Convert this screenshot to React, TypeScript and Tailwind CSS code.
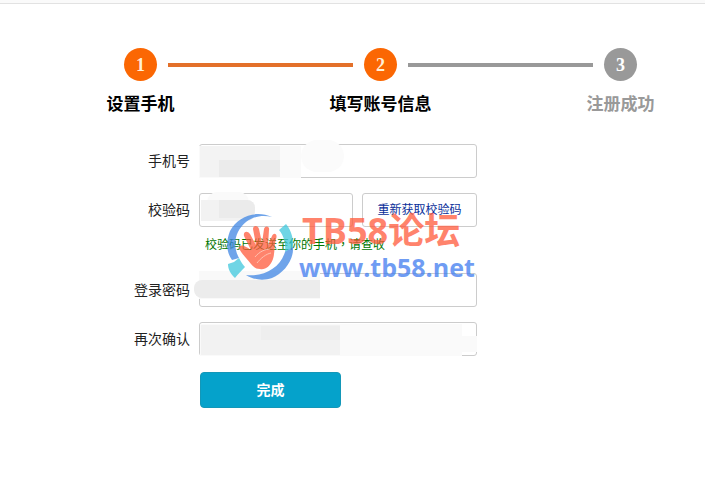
import { Fragment } from "react";
import type { ReactNode } from "react";

type Step = { id: number; title: string; done: boolean; lineDone: boolean };

const steps: Step[] = [
  { id: 1, title: "设置手机", done: true, lineDone: true },
  { id: 2, title: "填写账号信息", done: true, lineDone: false },
  { id: 3, title: "注册成功", done: false, lineDone: false },
];

const fieldClass =
  "block h-[34px] w-full rounded-[3px] border border-[#cccccc] bg-white px-2 text-sm outline-none";

function Stepper() {
  return (
    <ol className="flex items-start pr-[68px] pl-[124px]">
      {steps.map((step, i) => (
        <Fragment key={step.id}>
          <li className="flex w-[33px] shrink-0 flex-col items-center">
            <span
              className={`flex h-[33px] w-[33px] items-center justify-center rounded-full font-['Liberation_Serif',serif] text-lg leading-none font-bold ${
                step.done ? "bg-[#fb6703] text-[#fff0d8]" : "bg-[#999999] text-white"
              }`}
            >
              {step.id}
            </span>
            <span
              className={`mt-3 text-[17px] leading-6 font-bold whitespace-nowrap ${
                step.done ? "text-black" : "text-[#999999]"
              }`}
            >
              {step.title}
            </span>
          </li>
          {i < steps.length - 1 && (
            <li
              aria-hidden="true"
              className={`mx-[11px] mt-[15px] h-1 flex-1 ${step.lineDone ? "bg-[#e3702a]" : "bg-[#999999]"}`}
            />
          )}
        </Fragment>
      ))}
    </ol>
  );
}

function Row({ id, label, children }: { id: string; label: string; children: ReactNode }) {
  return (
    <div className="flex items-center gap-[9px]">
      <label htmlFor={id} className="w-[190px] shrink-0 text-right text-sm text-[#222222]">
        {label}
      </label>
      <div className="relative w-[278px]">{children}</div>
    </div>
  );
}

function Patch({ className }: { className: string }) {
  return <span aria-hidden="true" className={`pointer-events-none absolute ${className}`} />;
}

function Watermark() {
  return (
    <div className="pointer-events-none absolute top-[213px] left-[226px] flex items-start gap-1 opacity-75">
      <svg viewBox="0 0 68 68" className="h-[68px] w-[68px]" aria-hidden="true">
        <path d="M46 4C30-3 12 3 4 18C0 28 0 39 6 47L13 45C6 32 9 18 20 9C28 3 37 2 46 4Z" fill="#3f86e4" />
        <path d="M8 49L13 45C15 49 17 52 19 54C16 57 12 61 9 65C4 60 2 56 2 51Z" fill="#3fc8dd" />
        <path d="M53 17L60 11C66 18 68 28 67 36L59 40C60 31 58 23 53 17Z" fill="#3fc8dd" />
        <path d="M67 34C68 47 58 60 46 65C37 68 28 67 20 62C38 64 54 55 59 39Z" fill="#3f86e4" />
        <path
          d="M25 51C21 46 15 40 13 35C14 31 18 32 25 37L18 23C17 19 21 17 24 21L30 32L27 16C27 12 32 12 33 16L36 30L38 16C39 12 44 13 43 17L42 32L46 23C48 19 52 21 50 26C48 32 49 40 47 46C44 54 39 57 34 56C29 56 28 54 25 51Z"
          fill="#ff5a3c"
        />
        <path d="M31 50C35 45 40 41 45 40M29 44C33 39 39 36 44 36" fill="none" stroke="#ffad96" strokeWidth="1" />
      </svg>
      <div className="font-['Open_Sans','Noto_Sans_CJK_SC',sans-serif] font-bold whitespace-nowrap">
        <p className="pl-1 text-[36px] leading-9 text-[#ff5a3c]">TB58论坛</p>
        <p className="pt-1.5 pl-px text-[25px] leading-6 text-[#3f7bf0]">www.tb58.net</p>
      </div>
    </div>
  );
}

export default function App() {
  return (
    <main className="relative min-h-screen bg-white font-['Liberation_Sans','Noto_Sans_CJK_SC',sans-serif]">
      <div className="h-1 border-b border-[#e2e2e2] bg-[#fafafa]" />
      <div className="pt-11">
        <Stepper />
      </div>

      <form className="mt-[27px] flex flex-col gap-[15px]" onSubmit={(e) => e.preventDefault()}>
        <Row id="phone" label="手机号">
          <input id="phone" type="tel" className={fieldClass} />
          <Patch className="top-[2px] left-0 h-8 w-[102px] bg-[#fafafa]" />
          <Patch className="top-[2px] left-px h-[31px] w-20 bg-[#f3f3f3]" />
          <Patch className="top-[16px] left-5 h-[17px] w-[61px] bg-[#ebebeb]" />
          <Patch className="-top-1 left-[102px] h-8 w-[43px] rounded-full bg-[#fbfbfb]" />
        </Row>

        <div>
          <Row id="code" label="校验码">
            <div className="flex gap-[9px]">
              <input id="code" type="text" className={`${fieldClass} flex-1`} />
              <button
                type="button"
                className="h-[34px] w-[115px] shrink-0 rounded-[3px] border border-[#cccccc] bg-white text-xs text-[#0a2f9a]"
              >
                重新获取校验码
              </button>
            </div>
            <Patch className="-top-px left-2 h-5 w-[42px] rounded-full bg-[#fafafa]" />
            <Patch className="top-[7px] left-[2px] h-[21px] w-[54px] rounded-r-lg bg-[#f2f2f2]" />
            <Patch className="top-[7px] left-5 h-[18px] w-[36px] rounded-r-lg bg-[#ebebeb]" />
          </Row>
          <p className="mt-2.5 ml-[205px] text-xs leading-4 text-[#007500]">
            校验码已发送至你的手机<span className="font-['Noto_Sans_CJK_TC',sans-serif] leading-none" lang="zh-TW">，</span>请查收
          </p>
          <div className="h-[5px]" />
        </div>

        <Row id="password" label="登录密码">
          <input id="password" type="password" className={fieldClass} />
          <Patch className="-top-[2px] left-0 h-[28px] w-[121px] bg-[#f9f9f9]" />
          <Patch className="top-[7px] -left-[5px] h-[18px] w-[126px] rounded-l-lg bg-[#ececec]" />
        </Row>

        <Row id="confirm" label="再次确认">
          <input id="confirm" type="password" className={fieldClass} />
          <Patch className="top-[2px] left-[1px] h-8 w-[262px] bg-[#fafafa]" />
          <Patch className="top-[14px] left-[262px] h-4 w-4 bg-[#fafafa]" />
          <Patch className="top-[3px] left-[2px] h-[30px] w-[139px] bg-[#f2f2f2]" />
          <Patch className="top-[4px] left-[62px] h-3.5 w-[79px] bg-[#eeeeee]" />
        </Row>

        <button
          type="submit"
          className="mt-px ml-[200px] h-9 w-[141px] rounded-[4px] border border-[#1397b8] bg-[#05a2cb] text-sm font-bold text-white"
        >
          完成
        </button>
      </form>

      <Watermark />
    </main>
  );
}
